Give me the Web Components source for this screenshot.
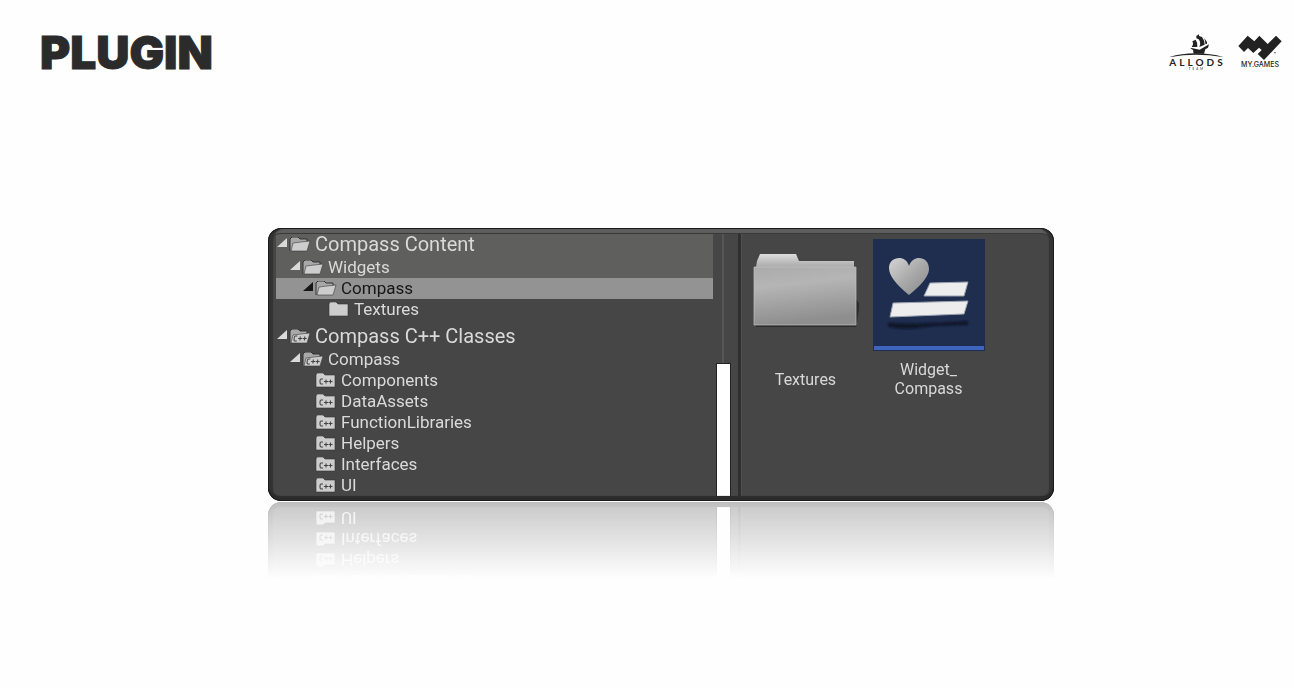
<!DOCTYPE html>
<html lang="en">
<head>
<meta charset="utf-8">
<title>Plugin</title>
<style>
  body { margin: 0; background: #fefefe; font-family: Roboto, "Liberation Sans", sans-serif; color: #dadada; }
</style>
</head>
<body>
<plugin-slide>
  <span slot="title">PLUGIN</span>
  <allods-logo slot="logos"></allods-logo>
  <mygames-logo slot="logos"></mygames-logo>
  <content-browser>
    <tree-row slot="tree" level="0" large shaded open>Compass Content</tree-row>
    <tree-row slot="tree" level="1" shaded open>Widgets</tree-row>
    <tree-row slot="tree" level="2" selected open>Compass</tree-row>
    <tree-row slot="tree" level="3">Textures</tree-row>
    <tree-row slot="tree" level="0" large spaced open code>Compass C++ Classes</tree-row>
    <tree-row slot="tree" level="1" open code>Compass</tree-row>
    <tree-row slot="tree" level="2" code>Components</tree-row>
    <tree-row slot="tree" level="2" code>DataAssets</tree-row>
    <tree-row slot="tree" level="2" code>FunctionLibraries</tree-row>
    <tree-row slot="tree" level="2" code>Helpers</tree-row>
    <tree-row slot="tree" level="2" code>Interfaces</tree-row>
    <tree-row slot="tree" level="2" code>UI</tree-row>
    <asset-tile slot="assets" kind="folder">Textures</asset-tile>
    <asset-tile slot="assets" kind="widget">Widget_<br>Compass</asset-tile>
  </content-browser>
</plugin-slide>

<script>
class Base extends HTMLElement {
  connectedCallback() {
    if (this.shadowRoot) return;
    this.attachShadow({ mode: 'open' }).innerHTML = this.render();
  }
}

customElements.define('plugin-slide', class extends Base {
  render() {
    return `<style>
      :host { display: block; min-height: 100vh; box-sizing: border-box; padding-bottom: 100px; }
      header { display: flex; justify-content: space-between; align-items: flex-start; padding: 28px 12px 0 40px; }
      h1 { margin: 0; font: 900 46px/48px Inter, sans-serif; color: #2b2b2b; -webkit-text-stroke: 1px #2b2b2b; }
      .logos { display: flex; gap: 12px; padding-top: 6px; }
      main { display: grid; grid-template-columns: 268fr 786fr 240fr; padding-top: 152px; }
      ::slotted(content-browser) { grid-column: 2; }
    </style>
    <header><h1><slot name="title"></slot></h1><div class="logos"><slot name="logos"></slot></div></header>
    <main><slot></slot></main>`;
  }
});

customElements.define('allods-logo', class extends Base {
  render() {
    return `<style>
      :host { display: flex; flex-direction: column; align-items: center; color: #222; }
      svg { display: block; }
      .name { font: 700 10px/10px Lato, sans-serif; letter-spacing: 3px; margin-right: -3px; }
      .team { font: 700 3px/4px Lato, sans-serif; letter-spacing: 2px; margin-right: -2px; opacity: .7; }
    </style>
    <svg width="60" height="23" viewBox="3 11 180 69" fill="#222" aria-hidden="true">
      <path d="M8 82Q45 69 92 69T178 81Q135 73 92 73T8 82Z"/>
      <path d="M76 54L80 53L104 58L132 42L129 52L121 57L117 70H86L84 59Z"/>
      <path d="M94 17L102 12V17L111 20Q120 32 119 43L103 50Q109 38 101 27L94 24Z"/>
      <path d="M82 33L92 28Q99 38 97 50L80 50Q87 42 82 33ZM117 24L122 29Q128 35 126 40L121 42Q122 32 117 24Z"/>
    </svg>
    <span class="name">ALLODS</span><span class="team">TEAM</span>`;
  }
});

customElements.define('mygames-logo', class extends Base {
  render() {
    return `<style>
      :host { display: flex; flex-direction: column; align-items: center; color: #222; }
      svg { display: block; }
      span { font: 500 7px/8px Inter, sans-serif; }
    </style>
    <svg width="44" height="27" viewBox="12 6 132 81" fill="#222" aria-hidden="true">
      <path d="M13 42L41 11L61 28L76 11L101 36L126 11L143 28L90 84L71 66L83 54L75 47L58 63L42 48L30 60Z"/>
      <circle cx="123" cy="62" r="2"/>
    </svg>
    <span>MY.GAMES</span>`;
  }
});

customElements.define('content-browser', class extends Base {
  render() {
    return `<style>
      :host { display: block; position: relative; box-sizing: border-box; background: #464646;
        padding: 3px 8px 5px; border-radius: 13px; overflow: hidden;
        -webkit-box-reflect: below 1px linear-gradient(transparent 72%, rgba(0,0,0,.29)); }
      :host::after { content: ""; position: absolute; inset: 0; border-radius: 13px; pointer-events: none;
        box-shadow: inset 0 0 0 1px #1b1b1b, inset 0 -5px 1px #2b2b2b, inset 5px 0 1px #323232, inset -5px 0 1px #343434, inset 0 5px 0 #5d5d5d, inset 0 6px 0 #3a3a3a; }
      .body { display: flex; }
      .tree { flex: 437 1 0; min-width: 0; }
      .scroll { flex: none; width: 14px; margin: 0 8px 0 3px; display: grid; grid-template-rows: 1fr 1fr; justify-items: center; }
      .track { width: 2px; background: #565656; }
      .thumb { width: 13px; background: #fff; box-shadow: 0 0 0 1px #222; }
      .assets { flex: 302 1 0; min-width: 0; display: flex; align-items: flex-start; padding: 8px 0 0 3px; border-left: 3px solid #2f2f2f; box-shadow: inset 1px 0 0 #505050; }
    </style>
    <div class="body">
      <div class="tree" role="tree"><slot name="tree"></slot></div>
      <div class="scroll"><div class="track"></div><div class="thumb"></div></div>
      <div class="assets"><slot name="assets"></slot></div>
    </div>`;
  }
});

customElements.define('tree-row', class extends Base {
  render() {
    const open = this.hasAttribute('open'), code = this.hasAttribute('code');
    this.setAttribute('role', 'treeitem');
    const arrow = open ? '<path d="M10 0V9H0Z" fill="currentColor"/>' : '';
    let icon;
    if (open) {
      icon = `<path d="M1 14V2L3 0H9L11 2H18V5" fill="#a8a8a8" stroke="#333"/>
        <path d="M2 14L4 6L12 5L21 4L18 14Z" fill="#cdcdcd" stroke="#3a3a3a" stroke-width=".6"/>`;
    } else {
      icon = `<path d="M1 14V2L2 0H8L10 2H20V14Z" fill="#cdcdcd" stroke="#333" stroke-width=".6"/>`;
    }
    if (code) {
      icon += `<g fill="none" stroke="#444" stroke-width="1.1" ${open ? 'transform="translate(1 1) skewX(-6)"' : ''}>
        <path d="M8 6H6Q5 6 5 8.500Q5 11 6 11H8M9 8.500H13M11 6.500V10.500M13.500 8.500H17.500M15.500 6.500V10.500"/></g>`;
    }
    return `<style>
      :host { display: flex; height: 21px; align-items: center; font-size: 17px; line-height: 21px; white-space: nowrap; color: #dadada; }
      :host([large]) { height: 26px; font-size: 20px; line-height: 26px; }
      :host([shaded]) { background: #5f5f5e; }
      :host([selected]) { background: #939393; color: #161616; }
      :host([spaced]) { margin-top: 3px; }
      :host([level="0"]) { padding-left: 1px; }
      :host([level="1"]) { padding-left: 14px; }
      :host([level="2"]) { padding-left: 27px; }
      :host([level="3"]) { padding-left: 40px; }
      .arrow { width: 10px; height: 9px; margin: 0 2px 4px 0; flex: none; }
      .icon { width: 22px; height: 15px; margin-right: 4px; flex: none; }
    </style>
    <svg class="arrow" viewBox="0 0 10 9" aria-hidden="true">${arrow}</svg>
    <svg class="icon" viewBox="0 0 22 15" aria-hidden="true">${icon}</svg>
    <span><slot></slot></span>`;
  }
});

customElements.define('asset-tile', class extends Base {
  render() {
    const art = this.getAttribute('kind') === 'folder'
      ? `<defs><linearGradient id="f" x1="0" y1="0" x2=".2" y2="1"><stop stop-color="#ababab"/><stop offset=".35" stop-color="#b5b5b5"/><stop offset="1" stop-color="#8e8e8e"/></linearGradient>
          <linearGradient id="t" x1="0" y1="0" x2="0" y2="1"><stop stop-color="#dcdcdc"/><stop offset="1" stop-color="#a2a2a2"/></linearGradient></defs>
        <path d="M5 82L6 88H106L109 70V64L106 60Z" fill="#2c2c2c"/>
        <path d="M6 28L7 22L10 15H46L49 22H104V30H6Z" fill="url(#t)"/>
        <path d="M4 28H106V86H4Z" fill="url(#f)" stroke="#c2c2c2" stroke-width=".7"/>`
      : `<defs><linearGradient id="h" x1="0" y1="0" x2="1" y2="1"><stop stop-color="#d5d5d5"/><stop offset=".5" stop-color="#aaa"/><stop offset="1" stop-color="#888"/></linearGradient>
          <filter id="b"><feGaussianBlur stdDeviation="1"/></filter></defs>
        <rect width="112" height="112" fill="#1f2d4e"/>
        <rect x="1" y="107" width="110" height="4" fill="#3e65bd"/>
        <path d="M15 84Q50 86 95 82V86Q58 86 45 89Q25 91 15 87Z" fill="#0c1325" filter="url(#b)"/>
        <path d="M36 56Q16 40 16 29C16 17 33 15 36 27C40 15 56 17 56 30Q56 40 36 56Z" fill="url(#h)"/>
        <path d="M57 44L95 43L91 57L51 57Z" fill="#ededed" stroke="#9ba2b0"/>
        <path d="M20 64L95 62L91 75L17 78Z" fill="#ededed" stroke="#9ba2b0"/>`;
    return `<style>
      :host { display: block; width: 123px; text-align: center; color: #d8d8d8; }
      svg { display: block; margin: 0 auto; }
      .label { display: flex; height: 38px; margin-top: 9px; align-items: center; justify-content: center; font-size: 16px; line-height: 19px; }
    </style>
    <svg width="112" height="112" viewBox="0 0 112 112" aria-hidden="true">${art}</svg>
    <div class="label"><span><slot></slot></span></div>`;
  }
});
</script>
</body>
</html>
